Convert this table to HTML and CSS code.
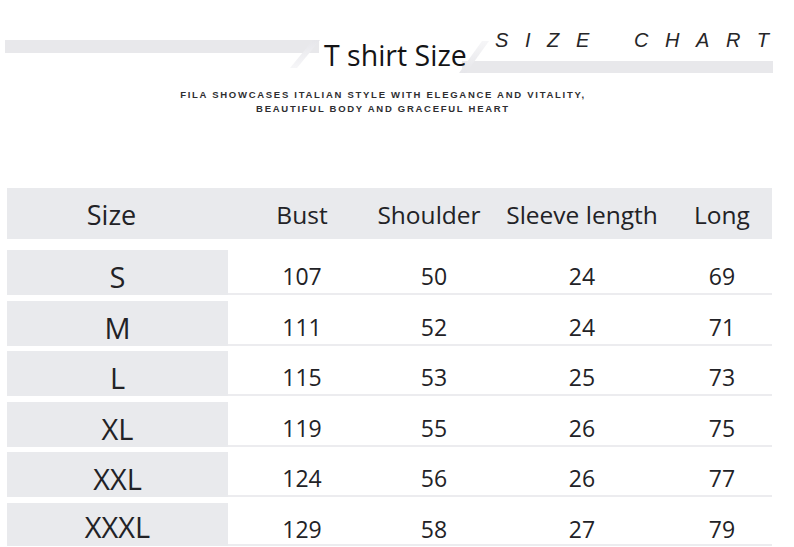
FILE: index.html
```html
<!DOCTYPE html>
<html lang="en">
<head>
<meta charset="utf-8">
<title>T shirt Size Chart</title>
<link rel="stylesheet" href="styles.css">
</head>
<body>
<header class="top">
  <svg class="deco" width="794" height="130" viewBox="0 0 794 130" aria-hidden="true">
    <defs>
      <linearGradient id="fadeL" x1="0" y1="0" x2="0" y2="1">
        <stop offset="0" stop-color="#e6e6ea"/>
        <stop offset="1" stop-color="#f6f6f8"/>
      </linearGradient>
      <linearGradient id="fadeR" x1="0" y1="1" x2="0" y2="0">
        <stop offset="0" stop-color="#e6e6ea"/>
        <stop offset="1" stop-color="#f6f6f8"/>
      </linearGradient>
    </defs>
    <rect x="5" y="40" width="314" height="13" fill="#e8e8eb"/>
    <polygon points="313,40 320,40 297,68 290,68" fill="url(#fadeL)"/>
    <rect x="462" y="61" width="311" height="12" fill="#e8e8eb"/>
    <polygon points="482,41 489,41 466,73 459,73" fill="url(#fadeR)"/>
  </svg>
  <div class="title-row">
    <h1 class="title">T shirt Size</h1>
    <div class="chart">SIZE CHART</div>
  </div>
  <p class="tagline">FILA SHOWCASES ITALIAN STYLE WITH ELEGANCE AND VITALITY,<br>BEAUTIFUL BODY AND GRACEFUL HEART</p>
</header>

<section class="table">
  <div class="row head">
    <div class="cell size">Size</div>
    <div class="cell">Bust</div>
    <div class="cell shoulder">Shoulder</div>
    <div class="cell">Sleeve length</div>
    <div class="cell">Long</div>
  </div>
  <div class="row">
    <div class="cell size">S</div>
    <div class="cell">107</div><div class="cell">50</div><div class="cell">24</div><div class="cell">69</div>
  </div>
  <div class="row">
    <div class="cell size">M</div>
    <div class="cell">111</div><div class="cell">52</div><div class="cell">24</div><div class="cell">71</div>
  </div>
  <div class="row">
    <div class="cell size">L</div>
    <div class="cell">115</div><div class="cell">53</div><div class="cell">25</div><div class="cell">73</div>
  </div>
  <div class="row">
    <div class="cell size">XL</div>
    <div class="cell">119</div><div class="cell">55</div><div class="cell">26</div><div class="cell">75</div>
  </div>
  <div class="row">
    <div class="cell size">XXL</div>
    <div class="cell">124</div><div class="cell">56</div><div class="cell">26</div><div class="cell">77</div>
  </div>
  <div class="row last">
    <div class="cell size">XXXL</div>
    <div class="cell">129</div><div class="cell">58</div><div class="cell">27</div><div class="cell">79</div>
  </div>
</section>
</body>
</html>
```

FILE: styles.css
```css
* { box-sizing: border-box; }

html, body {
  margin: 0;
  padding: 0;
  background: #ffffff;
}

body {
  width: 794px;
  height: 547px;
  overflow: hidden;
  font-family: "Open Sans", "Noto Sans", sans-serif;
  color: #222226;
}

.top {
  position: relative;
  height: 188px;
}

.deco {
  position: absolute;
  left: 0;
  top: 0;
}

.title-row {
  position: relative;
  z-index: 1;
  display: grid;
  grid-template-columns: 171px auto;
  align-items: start;
  padding: 30px 0 0 324px;
}

.title {
  margin: 11px 0 0 0;
  font-size: 28.5px;
  line-height: 28px;
  font-weight: 400;
  color: #141416;
  white-space: nowrap;
}

.chart {
  font-family: "Liberation Sans", Arial, sans-serif;
  font-style: italic;
  font-size: 20px;
  line-height: 20px;
  letter-spacing: 16.6px;
  word-spacing: 6px;
  color: #262628;
  white-space: nowrap;
}

.tagline {
  position: relative;
  z-index: 1;
  width: 766px;
  margin: 19px 0 0 0;
  text-align: center;
  font-family: "Liberation Sans", Arial, sans-serif;
  font-weight: 700;
  font-size: 9.5px;
  line-height: 14px;
  letter-spacing: 1.72px;
  color: #2e2e31;
}

.table {
  width: 765px;
  margin-left: 7px;
}

.row {
  display: grid;
  grid-template-columns: 221px 148px 116px 180px 100px;
  height: 45px;
  margin-top: 5.6px;
}

.row.last {
  height: 43px;
}

.row.head {
  height: 51px;
  margin-top: 0;
  margin-bottom: 11px;
  background: #e9eaed;
}

.cell {
  display: flex;
  align-items: center;
  justify-content: center;
  padding-top: 10px;
  font-size: 23px;
  line-height: 23px;
  color: #222226;
  border-bottom: 2px solid #ececef;
}

.cell.size {
  background: #e9eaed;
  border-bottom: none;
  padding-top: 8px;
  font-size: 29px;
  line-height: 29px;
}

.row.last .cell {
  padding-top: 12px;
}

.row.last .cell.size {
  padding-top: 4px;
}

.head .cell {
  border-bottom: none;
  padding-top: 2px;
  font-size: 24.5px;
  line-height: 25px;
}

.head .cell.size {
  padding-top: 2px;
  font-size: 27px;
  line-height: 27px;
  padding-right: 12px;
}

.head .cell.shoulder {
  padding-right: 10px;
}
```
